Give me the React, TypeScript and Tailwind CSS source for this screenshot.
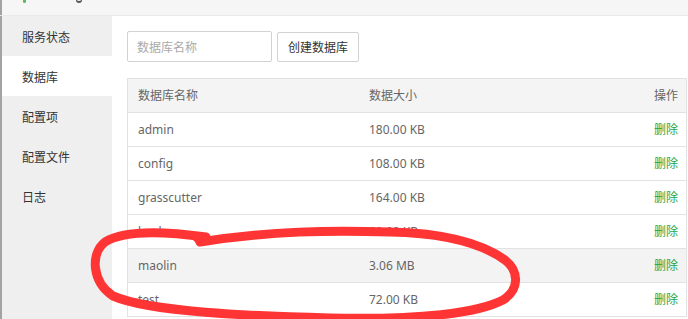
import React from "react";

const rows = [
  { name: "admin", size: "180.00 KB" },
  { name: "config", size: "108.00 KB" },
  { name: "grasscutter", size: "164.00 KB" },
  { name: "koala", size: "80.00 KB" },
  { name: "maolin", size: "3.06 MB", hover: true },
  { name: "test", size: "72.00 KB" },
];

const nav = ["服务状态", "数据库", "配置项", "配置文件", "日志"];

export default function App() {
  return (
    <div
      className="relative w-[688px] h-[319px] overflow-hidden bg-white text-[12px]"
      style={{ fontFamily: '"Noto Sans", "Noto Sans CJK SC", sans-serif' }}
    >
      {/* top bar */}
      <div className="h-[16px] bg-[#f6f6f6] border-b border-[#e9e9e9] flex items-start">
        <div className="w-[2px] h-full bg-[#a3a3a3]" />
        <div className="ml-[21px] w-[3px] h-[3px] bg-[#5cb85c] rounded-b" />
        <div className="ml-[50px] w-[6px] h-[3px] border-b-2 border-x border-[#555] rounded-b-full" />
      </div>
      <div className="flex h-[303px]">
        <div className="w-[2px] bg-[#a3a3a3]" />
        <div className="w-[110px] bg-[#efefef] flex flex-col">
          {nav.map((n) => (
            <div
              key={n}
              className={`h-[40px] flex items-center pl-[20px] pt-[3px] text-[#333] ${n === "数据库" ? "bg-white" : ""}`}
            >
              {n}
            </div>
          ))}
        </div>
        <div className="flex-1 pl-[15px] pt-[15px]">
          <div className="flex items-center gap-[5px]">
            <div className="w-[145px] h-[31px] border border-[#d2d2d2] rounded-[2px] flex items-center pl-[9px] pt-[2px] text-[#aaa]">
              数据库名称
            </div>
            <div className="w-[82px] h-[30px] border border-[#d2d2d2] rounded-[2px] flex items-center justify-center pt-[2px] text-[#333]">
              创建数据库
            </div>
          </div>
          <div className="mt-[16px] w-[560px] border-x border-t border-[#e2e2e2] text-[#666]">
            <div className="h-[34px] bg-[#f4f4f4] border-b border-[#e2e2e2] flex items-center pt-[1px]">
              <div className="w-[231px] pl-[10px]">数据库名称</div>
              <div className="flex-1 pl-[10px]">数据大小</div>
              <div className="pr-[8px]">操作</div>
            </div>
            {rows.map((r) => (
              <div
                key={r.name}
                className={`h-[34px] border-b border-[#e2e2e2] flex items-center ${r.hover ? "bg-[#f3f3f3]" : ""}`}
              >
                <div className="w-[231px] pl-[10px]">{r.name}</div>
                <div className="flex-1 pl-[10px]">{r.size}</div>
                <div className="pr-[8px] pt-[1px] text-[#1fa63f]">删除</div>
              </div>
            ))}
          </div>
        </div>
      </div>
      {/* hand-drawn red annotation */}
      <svg
        className="absolute left-0 top-0 pointer-events-none"
        width="688"
        height="319"
        viewBox="0 0 688 319"
      >
        <path
          d="M206 237 C170 232 125 229 105 242 C90 254 92 282 113 296 C150 312 250 316 330 318 C420 320 478 313 503 300 C520 289 519 271 505 260 C480 242 440 233 390 232 C330 230 270 231 200 242"
          fill="none"
          stroke="#ff3535"
          strokeWidth="9"
          strokeLinecap="round"
          strokeLinejoin="round"
        />
        <path d="M200 242 L196 238" fill="none" stroke="#ff3535" strokeWidth="7" strokeLinecap="round" />
      </svg>
    </div>
  );
}
